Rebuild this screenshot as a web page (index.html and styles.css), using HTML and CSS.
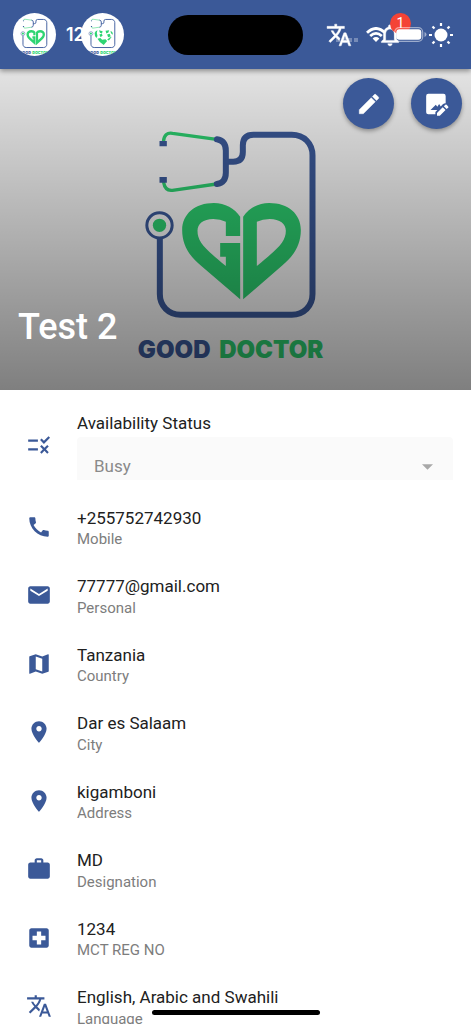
FILE: index.html
```html
<!DOCTYPE html>
<html lang="en">
<head>
<meta charset="utf-8">
<meta name="viewport" content="width=device-width, initial-scale=1">
<title>Test 2</title>
<link rel="stylesheet" href="styles.css">
</head>
<body>
<svg class="sprite" aria-hidden="true">
  <defs>
    <g id="logo-frame" fill="none">
      <g stroke="#2ed573" stroke-width="10">
        <path d="M131 94Q133 66 158 70L290 88"/>
        <path d="M131 216Q136 244 158 241L290 222"/>
      </g>
      <g fill="#3d5c9e"><path d="M119 93h22v16h-22zM119 201h22v17h-22z"/></g>
      <g stroke="#3d5c9e" stroke-width="18">
        <path stroke-linecap="round" d="M291 88Q318 92 318 122V188Q318 218 291 222"/>
        <path d="M318 155H340Q369 155 369 126V106Q369 74 401 74H516C552 74 578 100 578 136V552C578 588 552 614 516 614H182C146 614 120 588 120 552V386"/>
        <circle cx="119" cy="346" r="38" stroke-width="9"/>
      </g>
      <circle cx="119" cy="346" r="20" fill="#2ed573"/>
      <text class="logo-text" x="54" y="743" fill="#3d5c9e">GOOD <tspan x="298" fill="#2ed573">DOCTOR</tspan></text>
    </g>
    <g id="logo-heart" fill="#2ed573">
      <path d="M361 568L242 466C207 436 187 404 187 360C187 312 226 279 282 279C316 279 344 295 361 320V378H318V335Q302 327 280 327C250 327 233 342 233 362C233 395 254 415 318 468V440H301V399H361Z"/>
      <path fill-rule="evenodd" d="M370 568V320C387 295 415 279 448 279C505 279 543 312 543 360C543 404 523 436 488 466ZM411 335V468C475 415 498 395 498 362C498 342 480 327 450 327Q428 327 411 335Z"/>
    </g>
    <path id="i-translate" d="M12.870 15.070l-2.540-2.510.030-.030c1.740-1.940 2.980-4.170 3.710-6.530H17V4h-7V2H8v2H1v1.990h11.170C11.500 7.920 10.440 9.750 9 11.350 8.070 10.320 7.300 9.190 6.690 8h-2c.73 1.630 1.730 3.170 2.980 4.560l-5.090 5.020L4 19l5-5 3.110 3.110.76-2.040zM18.500 10h-2L12 22h2l1.120-3h4.750L21 22h2l-4.500-12zm-2.620 7l1.620-4.330L19.120 17h-3.240z"/>
    <path id="i-pin" d="M12 2C8.130 2 5 5.130 5 9c0 5.250 7 13 7 13s7-7.750 7-13c0-3.870-3.130-7-7-7zm0 9.500c-1.380 0-2.500-1.120-2.500-2.500s1.120-2.500 2.500-2.500 2.500 1.120 2.500 2.500-1.120 2.500-2.500 2.500z"/>
  </defs>
</svg>

<div class="app">
  <header class="app-bar">
    <button class="avatar" aria-label="Home">
      <svg viewBox="-72 -50 827 827"><use href="#logo-frame"/><use href="#logo-heart"/></svg>
    </button>
    <button class="avatar avatar-front" aria-label="Doctor">
      <svg viewBox="-72 -50 827 827">
        <use href="#logo-frame"/>
        <g fill="#2ed573">
          <path d="M190 335Q205 295 245 283L232 330L245 390L225 430Q185 385 190 335ZM275 280L345 300L330 345L292 330ZM400 290L470 280L455 325L415 345ZM495 295Q545 310 540 370L505 340ZM280 365L325 350L345 385L305 415ZM430 365L480 350L500 400L450 415ZM520 405L465 480L430 465L480 420ZM245 445L300 430L335 465L400 455L430 490L365 565L290 510Z"/>
        </g>
      </svg>
    </button>
    <span class="spacer"></span>
    <button class="bar-button" aria-label="Change language">
      <svg class="bold-icon" viewBox="0 0 24 24"><use href="#i-translate"/></svg>
    </button>
    <button class="bar-button" aria-label="Notifications, 1 new">
      <svg class="bold-icon" viewBox="0 0 24 24"><path d="M12 22c1.100 0 2-.9 2-2h-4c0 1.100.9 2 2 2zm6-6v-5c0-3.070-1.630-5.640-4.500-6.320V4c0-.83-.67-1.500-1.500-1.500s-1.500.67-1.500 1.500v.68C7.640 5.360 6 7.920 6 11v5l-2 2v1h16v-1l-2-2zm-2 1H8v-6c0-2.480 1.510-4.500 4-4.500s4 2.020 4 4.500v6z"/></svg>
      <span class="badge">1</span>
    </button>
    <button class="bar-button" aria-label="Light mode">
      <svg viewBox="0 0 26 26"><circle cx="13" cy="13" r="6.500"/><path fill="none" stroke="currentColor" stroke-width="2.200" d="M13 1v3M13 22v3M1 13h3M22 13h3M4.500 4.500l2 2M19.500 19.500l2 2M4.500 21.500l2-2M19.500 6.500l2-2"/></svg>
    </button>
    <div class="system-status" aria-hidden="true">
      <span class="clock">12</span>
      <span class="island"></span>
      <span class="signals">
        <svg class="dots" viewBox="0 0 22 15"><path d="M0 11h4v4H0zM6 11h4v4H6zM12 11h4v4h-4zM18 11h4v4h-4z"/></svg>
        <svg class="wifi" viewBox="0 0 20 15"><path d="M10 15L6.600 11.500Q10 8.600 13.400 11.500Z"/><path fill="none" stroke="currentColor" stroke-width="2.800" d="M1 5.700Q10-2.800 19 5.700M4.200 9Q10 3.800 15.800 9"/></svg>
        <svg class="battery" viewBox="0 0 33 15"><rect x=".7" y=".7" width="28" height="13.600" rx="4.500" fill="none" stroke="currentColor" stroke-opacity=".5" stroke-width="1.200"/><rect x="2.300" y="2.300" width="25" height="10.400" rx="3"/><path fill-opacity=".5" d="M30.500 5q2 .6 2 2.500t-2 2.500z"/></svg>
      </span>
    </div>
  </header>

  <main class="content">
    <section class="hero">
      <svg class="hero-logo" viewBox="-13 -123 720 963" role="img" aria-label="Good Doctor"><use href="#logo-frame"/><use href="#logo-heart"/></svg>
      <div class="hero-actions">
        <button class="fab" aria-label="Edit profile">
          <svg class="bold-icon" viewBox="0 0 24 24"><path d="M3 17.250V21h3.750L17.810 9.940l-3.750-3.750L3 17.250zM20.710 7.040c.39-.39.39-1.020 0-1.410l-2.340-2.340c-.39-.39-1.020-.39-1.410 0l-1.830 1.830 3.750 3.750 1.830-1.830z"/></svg>
        </button>
        <button class="fab" aria-label="Change picture">
          <svg viewBox="0 0 24 24"><path d="M4 2.500h14q2 0 2 2V11.200q-1.500 0-2.600 1.100l-2 2-1.400-2.300-1.700 2.600-1.400-2L6 17.500h6.300L10.500 19.400V21.500H4q-2 0-2-2v-15q0-2 2-2z"/><path d="M12 20.200V22.800h2.600l5.300-5.300-2.600-2.600zM22.300 14.200l-1.400-1.400q-.6-.5-1.200 0l-1.400 1.300 2.600 2.600 1.400-1.300q.6-.6 0-1.200z"/></svg>
        </button>
      </div>
      <h1 class="hero-name">Test 2</h1>
    </section>

    <ul class="details">
      <li class="row">
        <svg class="row-icon" viewBox="0 0 24 24"><path d="M16.540 11L13 7.460l1.410-1.410 2.120 2.120 4.240-4.240 1.410 1.410L16.540 11zM11 7H2v2h9V7zm10 6.410L19.590 12 17 14.590 14.410 12 13 13.410 15.590 16 13 18.590 14.410 20 17 17.410 19.590 20 21 18.590 18.410 16 21 13.410zM11 15H2v2h9v-2z"/></svg>
        <div class="row-body">
          <label class="title" for="availability">Availability Status</label>
          <div class="select-box">
            <select id="availability" class="select"><option>Busy</option><option>Available</option></select>
            <svg class="select-arrow" viewBox="0 0 10 5" aria-hidden="true"><path d="M0 0h10L5 5z"/></svg>
          </div>
        </div>
      </li>
      <li class="row">
        <svg class="row-icon" viewBox="0 0 24 24"><path d="M20.010 15.380c-1.230 0-2.420-.2-3.530-.56-.35-.12-.74-.03-1.010.24l-1.570 1.970c-2.830-1.350-5.480-3.900-6.890-6.830l1.950-1.660c.27-.28.35-.67.24-1.020-.37-1.110-.56-2.300-.56-3.530 0-.54-.45-.99-.99-.99H4.190C3.650 3 3 3.240 3 3.990 3 13.280 10.730 21 20.010 21c.71 0 .99-.63.99-1.180v-3.450c0-.54-.45-.99-.99-.99z"/></svg>
        <div class="row-body"><span class="title">+255752742930</span><span class="caption">Mobile</span></div>
      </li>
      <li class="row">
        <svg class="row-icon" viewBox="0 0 24 24"><path d="M20 4H4c-1.100 0-1.990.9-1.990 2L2 18c0 1.100.9 2 2 2h16c1.100 0 2-.9 2-2V6c0-1.100-.9-2-2-2zm0 4l-8 5-8-5V6l8 5 8-5v2z"/></svg>
        <div class="row-body"><span class="title">77777@gmail.com</span><span class="caption">Personal</span></div>
      </li>
      <li class="row">
        <svg class="row-icon" viewBox="0 0 24 24"><path d="M20.500 3l-.16.030L15 5.100 9 3 3.360 4.900c-.21.070-.36.250-.36.480V20.500c0 .28.22.5.5.5l.16-.03L9 18.900l6 2.100 5.640-1.900c.21-.07.36-.25.36-.48V3.500c0-.28-.22-.5-.5-.5zM15 19l-6-2.110V5l6 2.110V19z"/></svg>
        <div class="row-body"><span class="title">Tanzania</span><span class="caption">Country</span></div>
      </li>
      <li class="row">
        <svg class="row-icon" viewBox="0 0 24 24"><use href="#i-pin"/></svg>
        <div class="row-body"><span class="title">Dar es Salaam</span><span class="caption">City</span></div>
      </li>
      <li class="row">
        <svg class="row-icon" viewBox="0 0 24 24"><use href="#i-pin"/></svg>
        <div class="row-body"><span class="title">kigamboni</span><span class="caption">Address</span></div>
      </li>
      <li class="row">
        <svg class="row-icon" viewBox="0 0 24 24"><path d="M20 6h-4V4c0-1.110-.89-2-2-2h-4c-1.110 0-2 .89-2 2v2H4c-1.110 0-1.990.89-1.990 2L2 19c0 1.110.89 2 2 2h16c1.110 0 2-.89 2-2V8c0-1.110-.89-2-2-2zm-6 0h-4V4h4v2z"/></svg>
        <div class="row-body"><span class="title">MD</span><span class="caption">Designation</span></div>
      </li>
      <li class="row">
        <svg class="row-icon" viewBox="0 0 24 24"><path d="M19 3H5c-1.100 0-1.990.9-1.990 2L3 19c0 1.100.9 2 2 2h14c1.100 0 2-.9 2-2V5c0-1.100-.9-2-2-2zm-1 11h-4v4h-4v-4H6v-4h4V6h4v4h4v4z"/></svg>
        <div class="row-body"><span class="title">1234</span><span class="caption">MCT REG NO</span></div>
      </li>
      <li class="row">
        <svg class="row-icon" viewBox="0 0 24 24"><use href="#i-translate"/></svg>
        <div class="row-body"><span class="title">English, Arabic and Swahili</span><span class="caption">Language</span></div>
      </li>
    </ul>
  </main>
  <div class="home-indicator"></div>
</div>
</body>
</html>
```
FILE: styles.css
```css
:root {
  --blue: #3b5998;
}

* {
  box-sizing: border-box;
}

body {
  margin: 0;
  background: #fff;
  color: #212121;
  font-family: Roboto, "Liberation Sans", sans-serif;
}

button {
  padding: 0;
  border: 0;
  font: inherit;
  cursor: pointer;
}

svg {
  display: block;
  fill: currentColor;
}

.sprite {
  position: absolute;
  width: 0;
  height: 0;
}

.logo-text {
  font-family: Inter, sans-serif;
  font-size: 72px;
  font-weight: 900;
}

.app {
  position: relative;
  display: flex;
  flex-direction: column;
  height: 100vh;
  overflow: hidden;
}

/* App bar */
.app-bar {
  position: relative;
  z-index: 1;
  flex: none;
  display: flex;
  align-items: center;
  gap: 25px;
  padding: 13px 17px 13px 13px;
  background: var(--blue);
  color: #fff;
  box-shadow: 0 2px 5px rgba(0, 0, 0, .4);
}

.avatar {
  flex: none;
  width: 43px;
  height: 43px;
  border-radius: 50%;
  background: #fff;
  overflow: hidden;
}

.avatar-front {
  position: relative;
  z-index: 2;
}

.spacer {
  flex: 1;
}

.bar-button {
  position: relative;
  flex: none;
  width: 26px;
  height: 26px;
  background: none;
  color: #fff;
}

.bold-icon {
  stroke: currentColor;
  stroke-width: .4;
}

.badge {
  position: absolute;
  top: -9px;
  right: -8px;
  width: 21px;
  height: 21px;
  border-radius: 50%;
  background: #f44336;
  font-size: 14px;
  line-height: 21px;
  text-align: center;
}

.system-status {
  position: absolute;
  inset: 0;
  z-index: 1;
  display: grid;
  grid-template-columns: 1fr auto 1fr;
  align-items: center;
  pointer-events: none;
}

.clock {
  padding-left: 66px;
  font-family: Inter, sans-serif;
  font-size: 18px;
  font-weight: 600;
}

.island {
  width: 135px;
  height: 40px;
  border-radius: 20px;
  background: #000;
}

.signals {
  display: flex;
  justify-content: flex-end;
  gap: 8px;
  padding-right: 44px;
}

.dots {
  width: 22px;
  height: 15px;
  opacity: .3;
}

.wifi {
  width: 20px;
  height: 15px;
}

.battery {
  width: 33px;
  height: 15px;
}

/* Scrolling content */
.content {
  flex: 1;
  min-height: 0;
  overflow-y: auto;
  scrollbar-width: none;
}

.hero {
  position: relative;
  display: flex;
  flex-direction: column;
  justify-content: space-between;
  height: 321px;
  padding: 9px 9px 39px 18px;
}

.hero::after {
  content: "";
  position: absolute;
  inset: 0;
  background: linear-gradient(rgba(0, 0, 0, .11), rgba(0, 0, 0, .5));
}

.hero-logo {
  position: absolute;
  inset: 0;
  width: 100%;
  height: 100%;
}

.hero-actions {
  position: relative;
  z-index: 1;
  display: flex;
  justify-content: flex-end;
  gap: 17px;
}

.fab {
  display: grid;
  place-items: center;
  width: 51px;
  height: 51px;
  border-radius: 50%;
  background: var(--blue);
  color: #fff;
  box-shadow: 0 2px 4px rgba(0, 0, 0, .35);
}

.fab svg {
  width: 26px;
  height: 26px;
}

.hero-name {
  position: relative;
  z-index: 1;
  margin: 0;
  color: #fff;
  font-size: 36px;
  font-weight: 500;
  line-height: 48px;
}

/* Detail rows */
.details {
  margin: 0;
  padding: 8px 0 0;
  list-style: none;
}

.row {
  display: flex;
  align-items: center;
  gap: 25px;
  padding: 13px 18px 13px 26px;
}

.row-icon {
  flex: none;
  width: 26px;
  height: 26px;
  color: var(--blue);
}

.row-body {
  flex: 1;
  display: flex;
  flex-direction: column;
}

.title {
  font-size: 17px;
  line-height: 1.5;
}

.caption {
  color: #7d7d7d;
  font-size: 15px;
  line-height: 17px;
}

.select-box {
  position: relative;
}

.select {
  display: block;
  width: 100%;
  height: 43px;
  padding: 16px 40px 0 17px;
  border: 0;
  border-radius: 4px 4px 0 0;
  background: #fafafa;
  color: #8a8a8a;
  font: inherit;
  font-size: 17px;
  appearance: none;
}

.select-arrow {
  position: absolute;
  top: 27px;
  right: 20px;
  width: 11px;
  height: 6px;
  color: #a8a8a8;
  pointer-events: none;
}

.home-indicator {
  position: absolute;
  bottom: 9px;
  left: 50%;
  z-index: 2;
  width: 168px;
  height: 5px;
  margin-left: -84px;
  border-radius: 3px;
  background: #000;
}
```
